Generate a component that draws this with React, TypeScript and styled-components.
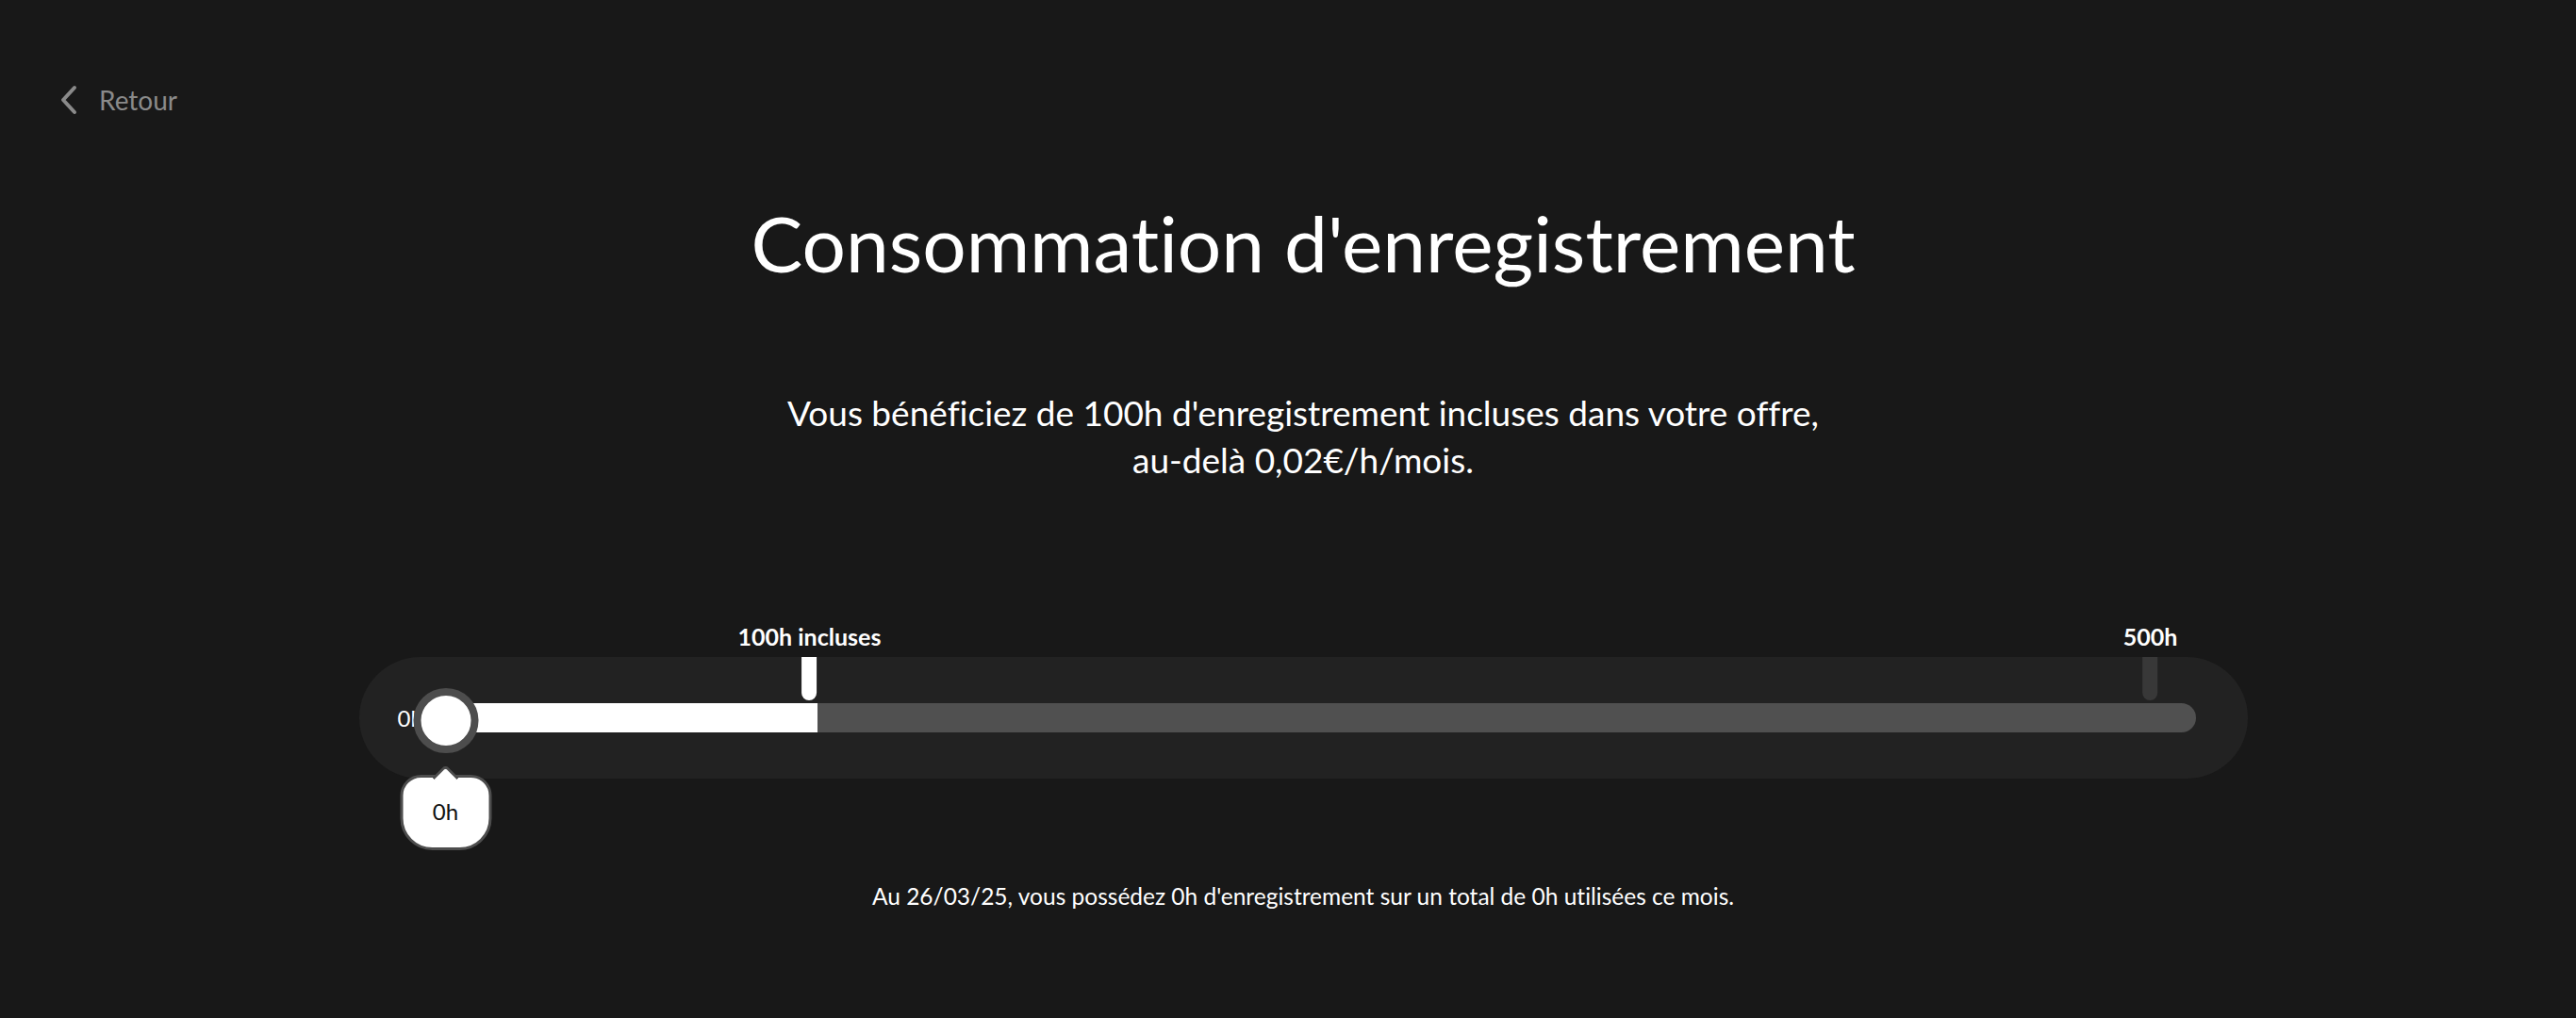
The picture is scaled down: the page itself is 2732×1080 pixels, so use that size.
import styled, { createGlobalStyle } from 'styled-components'

const GlobalStyle = createGlobalStyle`
  html, body {
    margin: 0;
    padding: 0;
    background: #181818;
  }
  body {
    font-family: Lato, 'Noto Sans', sans-serif;
    font-variant-ligatures: none;
    color: #ffffff;
  }
`

const Page = styled.div`
  min-height: 1080px;
  background: #181818;
  padding-left: 32px;
  box-sizing: border-box;
  display: flex;
  flex-direction: column;
`

const BackButton = styled.button`
  align-self: flex-start;
  display: flex;
  align-items: center;
  gap: 22px;
  margin: 90px 0 0 31px;
  padding: 0;
  height: 32px;
  background: none;
  border: none;
  cursor: pointer;
  color: #8a8a8a;
  font-family: inherit;
  font-size: 28px;
`

const Title = styled.h1`
  margin: 85px 0 0;
  text-align: center;
  font-size: 82px;
  line-height: 100px;
  font-weight: 400;
  color: #ffffff;
`

const Subtitle = styled.p`
  margin: 106px 0 0;
  text-align: center;
  font-size: 37px;
  line-height: 50px;
  color: #ffffff;
`

const SliderBox = styled.div`
  position: relative;
  align-self: center;
  width: 2003px;
  height: 129px;
  margin-top: 184px;
  box-sizing: border-box;
  padding: 0 55px 0 0;
  display: flex;
  align-items: center;
  background: #222222;
  border-radius: 65px;
`

const StartLabel = styled.span`
  flex: 0 0 64px;
  min-width: 0;
  box-sizing: border-box;
  padding-left: 41px;
  font-size: 24px;
  color: #ffffff;
  white-space: nowrap;
`

const Track = styled.div`
  flex: 1;
  height: 31px;
  background: #505050;
  border-radius: 16px;
  overflow: hidden;
  display: flex;
`

const Fill = styled.div`
  height: 100%;
  background: #ffffff;
`

/* label above, notch below, hung from the top edge of the slider box */
const Tick = styled.div`
  position: absolute;
  top: -36px;
  display: flex;
  flex-direction: column;
  align-items: center;
  gap: 8px;
  transform: translateX(-50%);
`

const TickLabel = styled.span`
  white-space: nowrap;
  font-size: 25px;
  line-height: 28px;
  font-weight: 700;
  color: #ffffff;
`

const Notch = styled.div<{ $active?: boolean }>`
  width: 16px;
  height: 46px;
  border-radius: 0 0 8px 8px;
  background: ${props => (props.$active ? '#ffffff' : '#383838')};
`

const Handle = styled.div`
  position: absolute;
  top: 33px;
  display: flex;
  flex-direction: column;
  align-items: center;
  gap: 23px;
  transform: translateX(-50%);
`

const Thumb = styled.div`
  width: 69px;
  height: 69px;
  box-sizing: border-box;
  border-radius: 50%;
  border: 8px solid #4d4d4d;
  background: #ffffff;
`

const Bubble = styled.div`
  position: relative;
  width: 97px;
  height: 80px;
  box-sizing: border-box;
  display: flex;
  align-items: center;
  justify-content: center;
  background: #ffffff;
  border: 3px solid #4d4d4d;
  border-radius: 22px 22px 34px 34px;
  font-size: 24px;
  color: #111111;

  &::before {
    content: '';
    position: absolute;
    top: -10px;
    left: 50%;
    width: 17px;
    height: 17px;
    margin-left: -10px;
    background: #ffffff;
    border-top: 3px solid #4d4d4d;
    border-left: 3px solid #4d4d4d;
    border-top-left-radius: 5px;
    transform: rotate(45deg);
  }
`

const BubbleText = styled.span`
  position: relative;
  top: -2px;
`

const Footer = styled.p`
  margin: 110px 0 0;
  text-align: center;
  font-size: 24.5px;
  line-height: 30px;
  color: #ffffff;
`

const ChevronLeft = () => (
  <svg width="20" height="32" viewBox="0 0 20 32" fill="none">
    <path d="M16 3 L4 16 L16 29" stroke="#8a8a8a" strokeWidth="4" strokeLinecap="round" strokeLinejoin="round" />
  </svg>
)

// positions along the slider box, in px from its left edge
const TRACK_START = 64
const ticks = [
  { label: '100h incluses', at: 478, active: true },
  { label: '500h', at: 1900, active: false },
]
const included = { end: 486 }
const current = { hours: 0, at: 92 }

export default function App() {
  return (
    <>
      <GlobalStyle />
      <Page>
        <BackButton>
          <ChevronLeft />
          Retour
        </BackButton>

        <Title>Consommation d'enregistrement</Title>

        <Subtitle>
          Vous bénéficiez de 100h d'enregistrement incluses dans votre offre,
          <br />
          au-delà 0,02€/h/mois.
        </Subtitle>

        <SliderBox>
          <StartLabel>0h</StartLabel>
          <Track>
            <Fill style={{ width: `${included.end - TRACK_START}px` }} />
          </Track>

          {ticks.map(t => (
            <Tick key={t.label} style={{ left: `${t.at}px` }}>
              <TickLabel>{t.label}</TickLabel>
              <Notch $active={t.active} />
            </Tick>
          ))}

          <Handle style={{ left: `${current.at}px` }}>
            <Thumb />
            <Bubble>
              <BubbleText>{current.hours}h</BubbleText>
            </Bubble>
          </Handle>
        </SliderBox>

        <Footer>Au 26/03/25, vous possédez 0h d'enregistrement sur un total de 0h utilisées ce mois.</Footer>
      </Page>
    </>
  )
}
